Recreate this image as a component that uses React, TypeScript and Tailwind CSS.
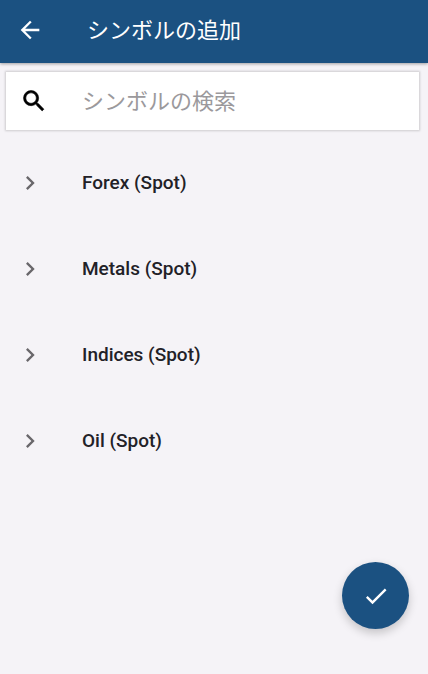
import { useState } from "react";
import { MdArrowBack, MdCheck, MdChevronRight } from "react-icons/md";

const groups = ["Forex (Spot)", "Metals (Spot)", "Indices (Spot)", "Oil (Spot)"];

function SearchIcon() {
  return (
    <svg
      viewBox="0 0 24 24"
      className="size-7 shrink-0 text-black"
      fill="currentColor"
      stroke="currentColor"
      strokeWidth="0.5"
      aria-hidden="true"
    >
      <path d="M15.5 14h-.79l-.28-.27A6.471 6.471 0 0 0 16 9.5 6.5 6.5 0 1 0 9.500 16c1.610 0 3.090-.59 4.230-1.570l.27.28v.79l5 4.990L20.490 19l-4.990-5zm-6 0C7.010 14 5 11.990 5 9.500S7.010 5 9.500 5 14 7.010 14 9.500 11.990 14 9.500 14z" />
    </svg>
  );
}

function App() {
  const [query, setQuery] = useState("");

  const visible = groups.filter((group) =>
    group.toLowerCase().includes(query.toLowerCase())
  );

  return (
    <div className="min-h-screen bg-[#f5f3f7] font-['Roboto','Noto_Sans_CJK_JP',sans-serif]">
      <header className="flex items-center h-[63px] pb-1 px-4 bg-[#1b5181] text-white shadow-[0_1px_3px_rgba(0,0,0,0.35)]">
        <button type="button" aria-label="戻る">
          <MdArrowBack className="size-7" />
        </button>
        <h1 className="ml-[43px] pt-0.5 text-[22px] leading-8">シンボルの追加</h1>
      </header>

      <main>
        <label className="flex items-center h-[58px] mt-[9px] ml-[6px] mr-[9px] pl-[14px] bg-white shadow-[0_0_2px_1px_rgba(0,0,0,0.16)]">
          <SearchIcon />
          <input
            type="text"
            aria-label="シンボルの検索"
            placeholder="シンボルの検索"
            value={query}
            onChange={(e) => setQuery(e.target.value)}
            className="grow min-w-0 ml-[34px] pt-0.5 text-[22px] leading-8 text-[#1f1f24] placeholder:text-[#9b999c] outline-none"
          />
        </label>

        <ul className="mt-[10px]">
          {visible.map((group) => (
            <li key={group}>
              <button
                type="button"
                className="flex items-center w-full h-[86px] px-4 text-left"
              >
                <MdChevronRight className="size-7 shrink-0 text-[#69676b]" />
                <span className="ml-[38px] text-[19px] leading-6 font-medium text-[#222127]">
                  {group}
                </span>
              </button>
            </li>
          ))}
        </ul>
      </main>

      <button
        type="button"
        aria-label="完了"
        className="fixed right-[19px] bottom-[45px] flex items-center justify-center size-[67px] rounded-full bg-[#1b5181] text-white shadow-[0_4px_10px_rgba(0,0,0,0.2)]"
      >
        <MdCheck className="size-7" />
      </button>
    </div>
  );
}

export default App;
